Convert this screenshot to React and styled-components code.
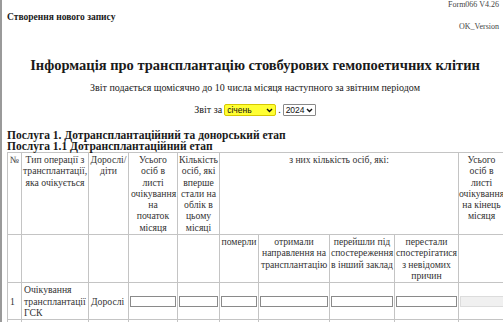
import React from "react";
import styled, { createGlobalStyle } from "styled-components";

const Global = createGlobalStyle`
  html, body { margin: 0; padding: 0; background: #fff; overflow: hidden; }
`;

const Page = styled.div`
  width: 503px;
  height: 322px;
  box-sizing: border-box;
  border-left: 2px solid #9a9a9a;
  padding-left: 5px;
  overflow: hidden;
  font-family: "Liberation Serif", serif;
  color: #1a1a1a;
`;

const TopBar = styled.div`
  display: flex;
  flex-direction: column;
  padding-right: 4px;
`;

const Meta = styled.div`
  align-self: flex-end;
  font-size: 8px;
  line-height: 9px;
  color: #444;
  margin-top: ${(p) => p.$mt || 0}px;
`;

const Heading = styled.div`
  font-weight: bold;
  font-size: 9.5px;
  line-height: 12px;
  margin-top: 2px;
`;

const Title = styled.div`
  margin: 25px 0 0;
  text-align: center;
  font-size: 14.5px;
  line-height: 18px;
  font-weight: bold;
  white-space: nowrap;
`;

const Note = styled.div`
  margin: 8px 0 0;
  text-align: center;
  font-size: 10px;
  line-height: 12px;
`;

const PeriodRow = styled.div`
  margin-top: 10px;
  display: flex;
  justify-content: center;
  align-items: center;
  gap: 2px;
  font-size: 10px;
  line-height: 12px;
`;

const Select = styled.span`
  display: inline-flex;
  align-items: center;
  justify-content: space-between;
  box-sizing: border-box;
  height: 12px;
  width: ${(p) => p.$w}px;
  padding: 0 2px;
  font-family: "Liberation Sans", Arial, sans-serif;
  font-size: 8.5px;
  background: ${(p) => (p.$hl ? "#ffff33" : "#fff")};
  border: 1px solid ${(p) => (p.$hl ? "#d6c800" : "#888")};
  border-radius: ${(p) => (p.$hl ? 2 : 1)}px;
  color: #111;
`;

const Section = styled.div`
  font-weight: bold;
  font-size: 11.5px;
  line-height: ${(p) => p.$lh || 12}px;
  margin-top: ${(p) => p.$mt || 0}px;
`;

const Table = styled.table`
  border-collapse: collapse;
  table-layout: fixed;
  width: 560px;
  font-size: 9.7px;
  line-height: 11.3px;
  color: #333;
`;

const Th = styled.td`
  border: 1px solid #c4c4c4;
  padding: 1px ${(p) => p.$px || 0}px;
  vertical-align: top;
  text-align: center;
  font-weight: normal;
`;

const Td = styled.td`
  border: 1px solid #c4c4c4;
  padding: 1px 2px;
  vertical-align: middle;
  text-align: left;
`;

const InputCell = styled.td`
  border: 1px solid #c4c4c4;
  padding: 0 1px;
  vertical-align: middle;
`;

const Field = styled.div`
  box-sizing: border-box;
  height: 11px;
  width: 100%;
  border: 1px solid ${(p) => (p.$disabled ? "#dcdcdc" : "#8a8a8a")};
  background: ${(p) => (p.$disabled ? "#f0f0f0" : "#fff")};
`;

const LastHead = styled.div`
  width: 45px;
`;

const Chevron = () => (
  <svg width="7" height="5" viewBox="0 0 7 5">
    <path d="M1 1 L3.5 3.5 L6 1" fill="none" stroke="#111" strokeWidth="1.4" />
  </svg>
);

const cols = [14, 67, 40, 49, 42, 39, 71, 65, 64, 109];

const DataRow = ({ n, who }) => (
  <tr>
    <Td>{n}</Td>
    <Td>Очікування трансплантації ГСК</Td>
    <Td>{who}</Td>
    <InputCell><Field /></InputCell>
    <InputCell><Field /></InputCell>
    <InputCell><Field /></InputCell>
    <InputCell><Field /></InputCell>
    <InputCell><Field /></InputCell>
    <InputCell><Field /></InputCell>
    <InputCell><Field $disabled /></InputCell>
  </tr>
);

export default function App() {
  return (
    <Page>
      <Global />
      <TopBar>
        <Meta>Form066 V4.26</Meta>
        <Heading>Створення нового запису</Heading>
        <Meta $mt={-1}>OK_Version</Meta>
      </TopBar>
      <Title>Інформація про трансплантацію стовбурових гемопоетичних клітин</Title>
      <Note>Звіт подається щомісячно до 10 числа місяця наступного за звітним періодом</Note>
      <PeriodRow>
        <span>Звіт за</span>
        <Select $hl $w={52}>
          <span>січень</span>
          <Chevron />
        </Select>
        <span>.</span>
        <Select $w={33}>
          <span>2024</span>
          <Chevron />
        </Select>
      </PeriodRow>
      <Section $mt={13}>Послуга 1. Дотрансплантаційний та донорський етап</Section>
      <Section $lh={11}>Послуга 1.1 Дотрансплантаційний етап</Section>
      <Table>
        <colgroup>
          {cols.map((w, i) => (
            <col key={i} style={{ width: w }} />
          ))}
        </colgroup>
        <tbody>
          <tr>
            <Th>№</Th>
            <Th>Тип операції з трансплантації, яка очікується</Th>
            <Th>Дорослі/ діти</Th>
            <Th $px={2}>Усього осіб в листі очікування на початок місяця</Th>
            <Th>Кількість осіб, які вперше стали на облік в цьому місяці</Th>
            <Th colSpan={4}>з них кількість осіб, які:</Th>
            <Th>
              <LastHead>Усього осіб в листі очікування на кінець місяця</LastHead>
            </Th>
          </tr>
          <tr>
            <Th />
            <Th />
            <Th />
            <Th />
            <Th />
            <Th>померли</Th>
            <Th>отримали направлення на трансплантацію</Th>
            <Th>перейшли під спостереження в інший заклад</Th>
            <Th>перестали спостерігатися з невідомих причин</Th>
            <Th />
          </tr>
          <DataRow n="1" who="Дорослі" />
          <DataRow n="2" who="Діти" />
        </tbody>
      </Table>
    </Page>
  );
}
